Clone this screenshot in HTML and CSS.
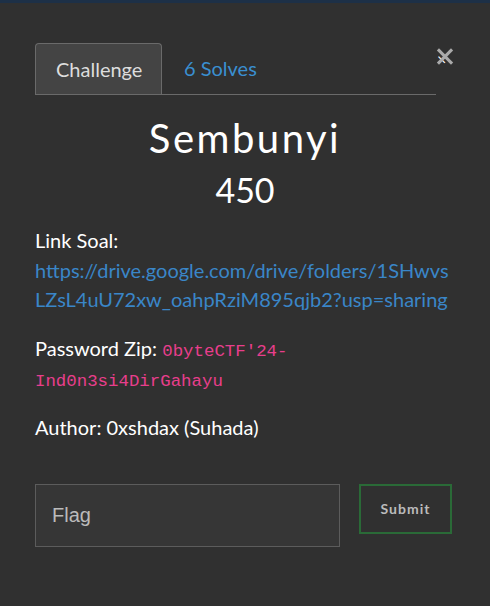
FILE: index.html
```html
<!DOCTYPE html>
<html>
<head>
<meta charset="utf-8">
<link rel="stylesheet" href="styles.css">
</head>
<body>
<div class="navstrip"></div>
<div class="modal">
  <div class="tabs-row">
    <div class="tabs">
      <div class="tab active">Challenge</div>
      <div class="tab link">6 Solves</div>
    </div>
    <div class="close">&times;</div>
  </div>
  <h2 class="title">Sembunyi</h2>
  <h3 class="points">450</h3>
  <div class="desc">
    <p>Link Soal:<br><a class="url" href="#">https://drive.google.com/drive/folders/1SHwvsLZsL4uU72xw_oahpRziM895qjb2?usp=sharing</a></p>
    <p>Password Zip: <code>0byteCTF'24-Ind0n3si4DirGahayu</code></p>
    <p>Author: 0xshdax (Suhada)</p>
  </div>
  <div class="form-row">
    <div class="input">Flag</div>
    <div class="submit">Submit</div>
  </div>
</div>
</body>
</html>
```
FILE: styles.css
```css
html, body { margin: 0; padding: 0; }
body {
  background: #303030;
  font-family: Lato, "Noto Sans", sans-serif;
  color: #fff;
  width: 490px;
  height: 606px;
  overflow: hidden;
}
.navstrip {
  height: 3px;
  background: #1d3047;
}
.modal {
  padding: 40px 35px 0 35px;
}
.tabs-row {
  position: relative;
  width: 401px;
}
.tabs {
  display: flex;
  border-bottom: 1px solid #6a6a6a;
  height: 51px;
}
.tab {
  font-size: 20px;
  padding: 0 20px;
  line-height: 50px;
}
.tab.active {
  background: #444;
  border: 1px solid #6a6a6a;
  border-bottom: none;
  border-radius: 4px 4px 0 0;
  color: #ddd;
  width: 85px;
}
.tab.link { color: #3a8fd0; padding-left: 22px; }
.close {
  position: absolute;
  right: -17px;
  top: 6px;
  width: 16px;
  height: 16px;
}
.close::before, .close::after {
  content: "";
  position: absolute;
  left: -2px;
  top: 6px;
  width: 20px;
  height: 3px;
  background: #aaa;
  transform: rotate(45deg);
}
.close::after { transform: rotate(-45deg); }
.title {
  margin: 20px 0 0;
  text-align: center;
  font-weight: 400;
  font-size: 40px;
  letter-spacing: 2.5px;
  line-height: 46px;
}
.points {
  margin: 8px 0 0;
  text-align: center;
  font-weight: 400;
  font-size: 34px;
  line-height: 42px;
}
.desc { margin-top: 15px; width: 416px; }
.desc p {
  margin: 0 0 19.5px;
  font-size: 20px;
  line-height: 29.5px;
}
.url {
  color: #3a86c8;
  text-decoration: none;
  word-break: break-all;
}
code {
  font-family: "Liberation Mono", monospace;
  color: #e83e8c;
  font-size: 17.4px;
  line-height: 1;
}
.form-row {
  display: flex;
  align-items: flex-start;
  margin-top: 42px;
}
.input {
  width: 287px;
  height: 61px;
  border: 1px solid #5c5c5c;
  background: #363636;
  color: #bbb;
  font-family: "Liberation Sans", sans-serif;
  font-size: 20px;
  line-height: 61px;
  padding-left: 16px;
  margin-right: 19px;
}
.submit {
  width: 89px;
  height: 46px;
  border: 2px solid #2a6a37;
  color: #bbb;
  font-size: 14px;
  font-weight: bold;
  letter-spacing: 1px;
  text-align: center;
  line-height: 46px;
}
```
